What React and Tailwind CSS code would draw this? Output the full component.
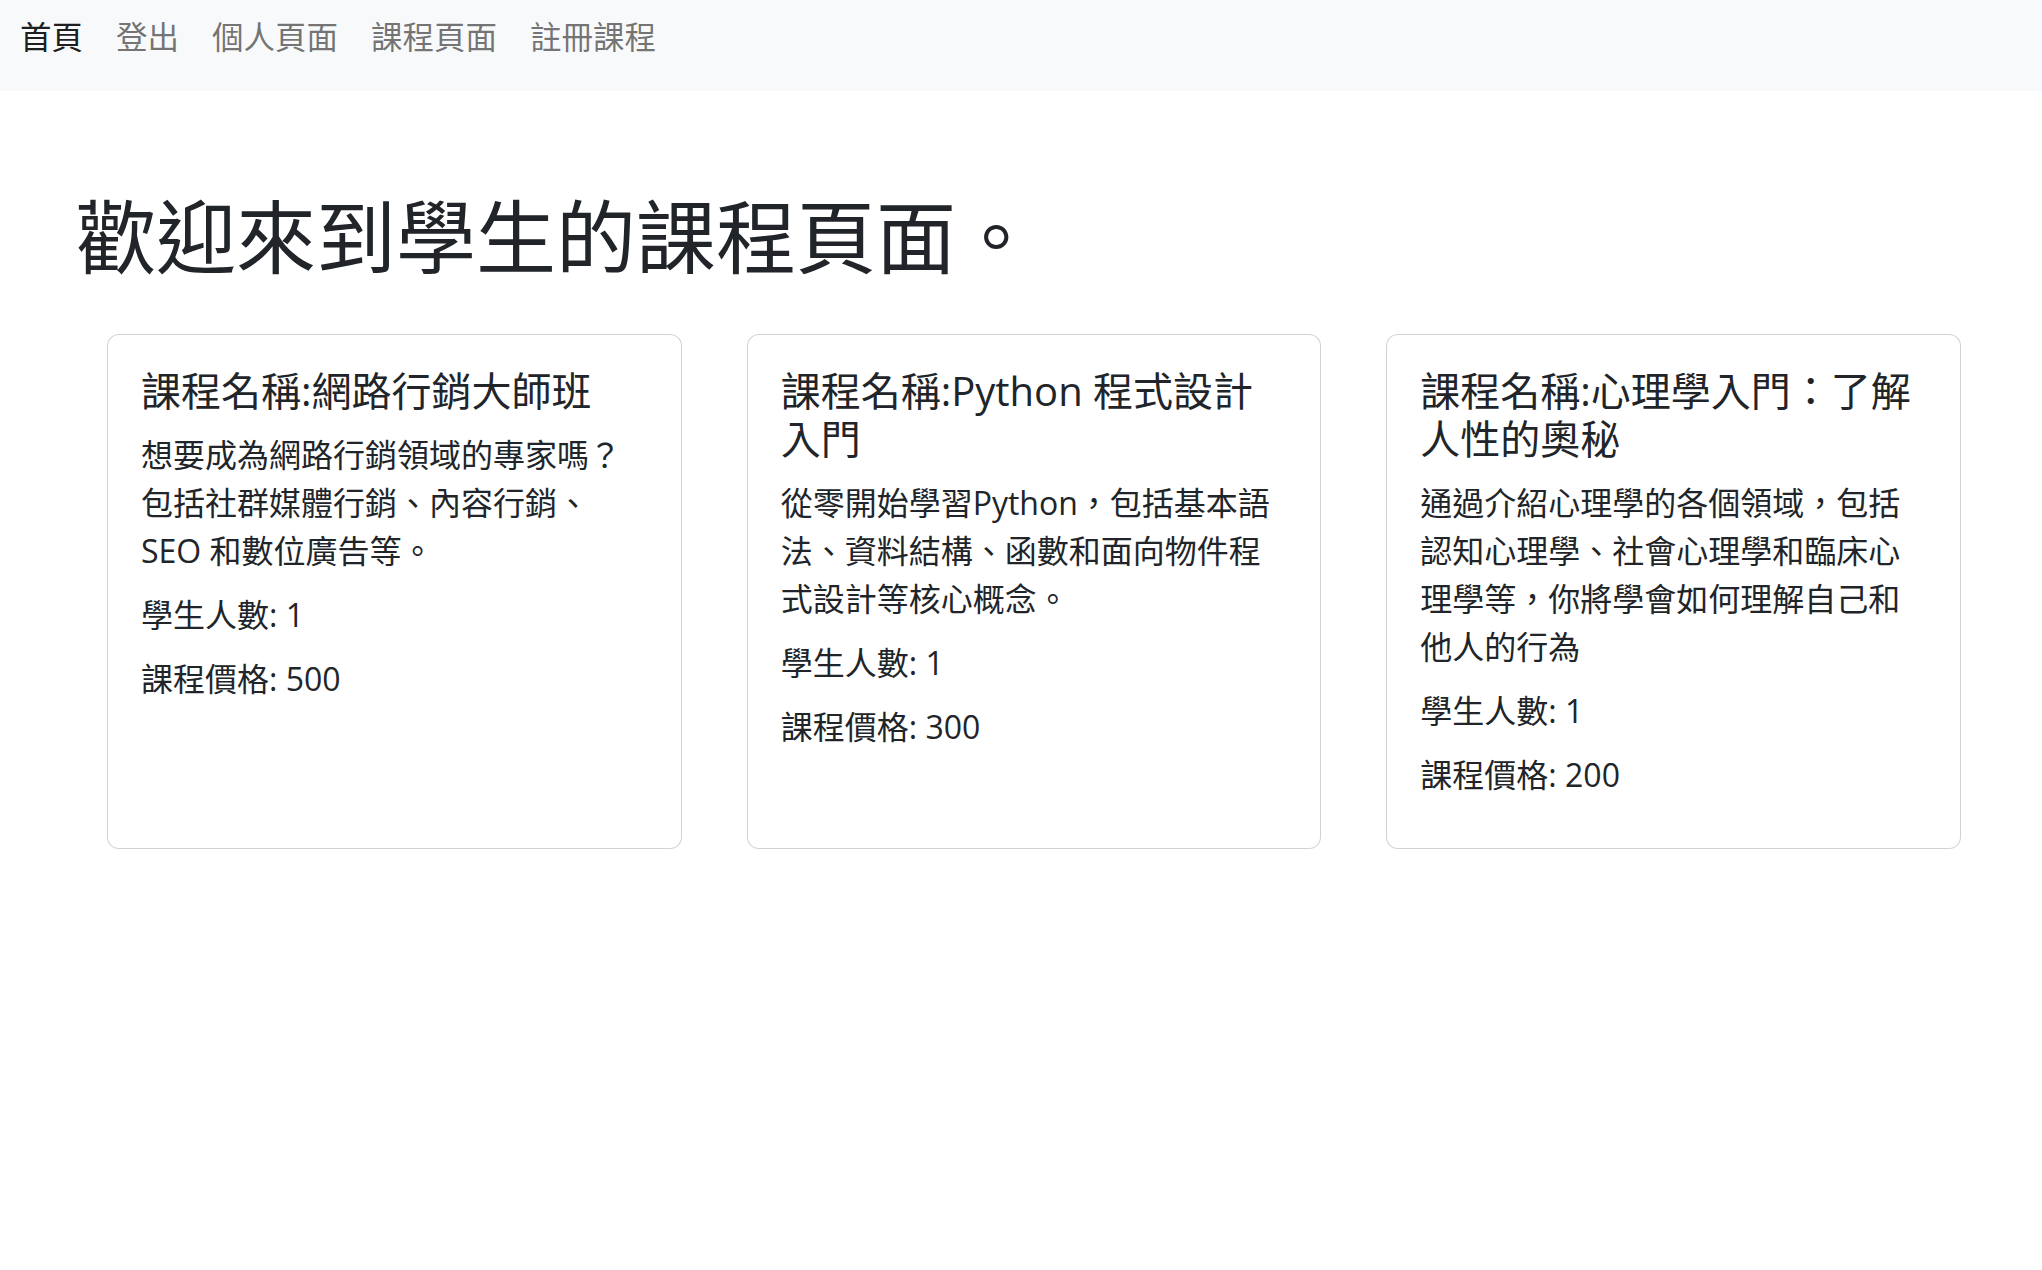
const courses = [
  {
    name: "網路行銷大師班",
    desc: "想要成為網路行銷領域的專家嗎？包括社群媒體行銷、內容行銷、SEO 和數位廣告等。",
    students: 1,
    price: 500,
  },
  {
    name: "Python 程式設計入門",
    desc: "從零開始學習Python，包括基本語法、資料結構、函數和面向物件程式設計等核心概念。",
    students: 1,
    price: 300,
  },
  {
    name: "心理學入門：了解人性的奧秘",
    desc: "通過介紹心理學的各個領域，包括認知心理學、社會心理學和臨床心理學等，你將學會如何理解自己和他人的行為",
    students: 1,
    price: 200,
  },
];

const links = ["登出", "個人頁面", "課程頁面", "註冊課程"];

export default function App() {
  return (
    <div
      lang="zh-Hant-TW"
      className="min-h-screen bg-white text-[#212529]"
      style={{ fontFamily: '"Open Sans", "Noto Sans CJK TC", sans-serif' }}
    >
      {/* Navbar */}
      <nav className="h-[91px] bg-[#f8f9fa] flex items-start pt-[13px] pl-[20px] gap-[33px] text-[31.5px] leading-[48px]">
        <a className="text-black/90">首頁</a>
        {links.map((l) => (
          <a key={l} className="text-black/55">
            {l}
          </a>
        ))}
      </nav>

      {/* Heading */}
      <h1 className="pl-[76px] pt-[97px] text-[80px] leading-[96px] font-normal">
        歡迎來到學生的課程頁面。
      </h1>

      {/* Course cards */}
      <section className="grid grid-cols-3 gap-[65px] pl-[107px] pr-[81px] mt-[50px]">
        {courses.map((c) => (
          <div
            key={c.name}
            className="border border-black/[0.175] rounded-[12px] pt-[32px] pb-[33px] pl-[33px] pr-[44px] bg-white"
          >
            <h5 className="text-[40px] leading-[48px] mb-[16px]">
              課程名稱:{c.name}
            </h5>
            <div className="text-[32px] leading-[48px]">
              <p className="mb-[16px]">{c.desc}</p>
              <p className="mb-[16px]">學生人數: {c.students}</p>
              <p className="mb-[16px]">課程價格: {c.price}</p>
            </div>
          </div>
        ))}
      </section>
    </div>
  );
}
